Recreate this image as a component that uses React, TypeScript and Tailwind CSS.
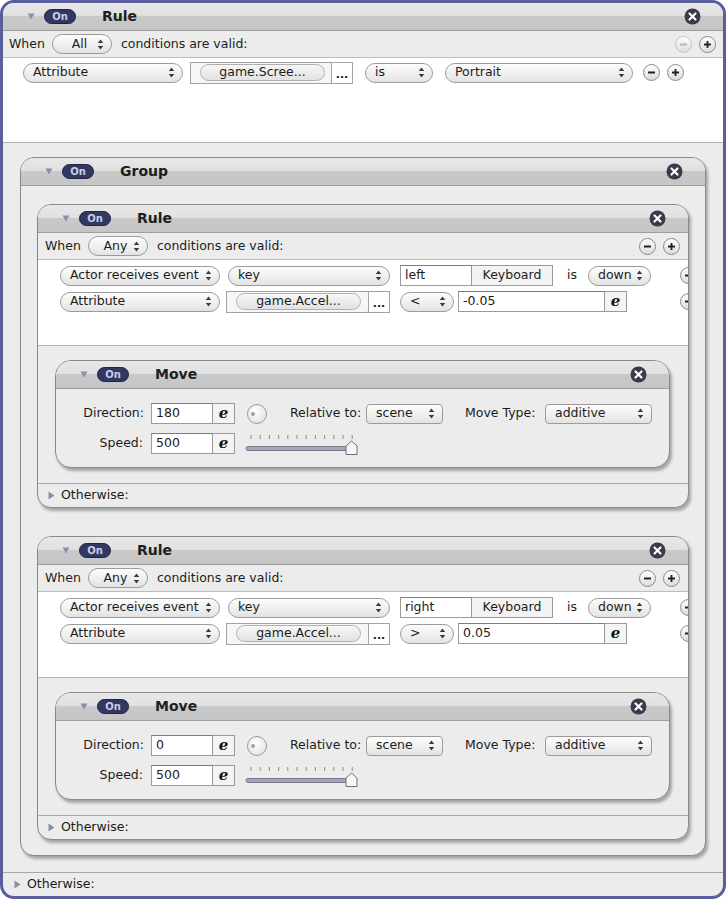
import React from "react";

const Arrows = () => (
  <svg width="7" height="11" viewBox="0 0 7 11" className="shrink-0">
    <path d="M3.5 0.5L6.2 4H0.8Z" fill="#3a3a3a" />
    <path d="M3.5 10.5L6.2 7H0.8Z" fill="#3a3a3a" />
  </svg>
);

const TriDown = () => (
  <svg width="8" height="7" viewBox="0 0 8 7" className="shrink-0">
    <path d="M0.5 0.5H7.5L4 6.5Z" fill="#8a8eac" />
  </svg>
);

const TriRight = () => (
  <svg width="7" height="9" viewBox="0 0 7 9" className="shrink-0">
    <path d="M0.5 0.5V8.5L6.5 4.5Z" fill="#8a8eac" />
  </svg>
);

const OnPill = () => (
  <span className="shrink-0 w-[32px] h-[15px] rounded-full bg-[#323862] border border-[#1e2247] flex items-center justify-center text-[10px] font-bold leading-none text-[#c9cdea]">
    On
  </span>
);

const CloseBtn = () => (
  <svg width="17" height="17" viewBox="0 0 17 17" className="shrink-0">
    <circle cx="8.5" cy="8.5" r="8" fill="#393a4c" />
    <path d="M5.5 5.5l6 6M11.5 5.5l-6 6" stroke="#fff" strokeWidth="2.2" strokeLinecap="round" />
  </svg>
);

function Header({ title }: { title: string }) {
  return (
    <div className="h-[28px] shrink-0 flex items-center pl-[24px] pr-[22px] border-b border-[#9d9d9d] bg-[linear-gradient(to_bottom,#e7e7e7_0%,#e1e1e1_46%,#c9c9c9_50%,#c5c5c5_100%)]">
      <TriDown />
      <span className="ml-[9px]">
        <OnPill />
      </span>
      <span className="ml-[26px] font-bold text-[14px] text-[#1e1e1e]">{title}</span>
      <span className="ml-auto">
        <CloseBtn />
      </span>
    </div>
  );
}

function CircleBtn({ sign, disabled }: { sign: "-" | "+"; disabled?: boolean }) {
  return (
    <span
      className={
        "shrink-0 w-[17px] h-[17px] rounded-full border flex items-center justify-center bg-[linear-gradient(to_bottom,#ffffff,#dcdcdc)] " +
        (disabled ? "border-[#c4c4c4] text-[#b8b8b8]" : "border-[#8a8a8a] text-[#222]")
      }
    >
      <svg width="9" height="9" viewBox="0 0 9 9">
        <path d="M1 4.5H8" stroke="currentColor" strokeWidth="1.8" />
        {sign === "+" && <path d="M4.5 1V8" stroke="currentColor" strokeWidth="1.8" />}
      </svg>
    </span>
  );
}

function Popup({ label, w, center, square }: { label: string; w: number; center?: boolean; square?: boolean }) {
  return (
    <span
      style={{ width: w }}
      className={
        "shrink-0 border border-[#9b9b9b] bg-[linear-gradient(to_bottom,#fdfdfd,#e3e3e3)] flex items-center pl-[9px] pr-[7px] " +
        (square ? "rounded-[4px] h-[20px]" : "rounded-full h-[20px]")
      }
    >
      <span className={"flex-1 whitespace-nowrap leading-none " + (center ? "text-center" : "")}>{label}</span>
      <Arrows />
    </span>
  );
}

function TextField({ value, w }: { value: string; w: number }) {
  return (
    <span
      style={{ width: w }}
      className="shrink-0 h-[21px] border border-[#9a9a9a] border-t-[#7d7d7d] bg-white flex items-center px-[4px] leading-none"
    >
      {value}
    </span>
  );
}

const EBtn = () => (
  <span className="shrink-0 w-[22px] h-[21px] border border-l-0 border-[#9a9a9a] bg-[#f4f4f4] flex items-center justify-center font-['DejaVu_Serif',serif] font-bold italic text-[15px] leading-none text-[#111]">
    e
  </span>
);

function ValueBox({ label, w, pill }: { label: string; w: number; pill: number }) {
  return (
    <span style={{ width: w }} className="shrink-0 h-[22px] border border-[#a3a3a3] bg-[#f6f6f6] flex items-center pl-[9px]">
      <span
        style={{ width: pill }}
        className="h-[17px] rounded-full border border-[#b0b0b0] bg-[linear-gradient(to_bottom,#f7f7f7,#e2e2e2)] flex items-center justify-center leading-none"
      >
        {label}
      </span>
      <span className="ml-auto w-[21px] h-full border-l border-[#a3a3a3] bg-white flex items-end justify-center pb-[3px] leading-none font-bold text-[11px]">
        ...
      </span>
    </span>
  );
}

const Knob = () => (
  <span className="shrink-0 w-[20px] h-[20px] rounded-full border border-[#9a9a9a] bg-[radial-gradient(circle_at_40%_35%,#ffffff,#dcdcdc)] flex items-center pl-[3px]">
    <span className="w-[4px] h-[4px] rounded-full bg-[#a0a0a0]" />
  </span>
);

const Slider = () => (
  <svg width="116" height="24" viewBox="0 0 116 24" className="shrink-0">
    {Array.from({ length: 12 }).map((_, i) => (
      <line key={i} x1={6 + i * 9.2} y1="3" x2={6 + i * 9.2} y2="7" stroke="#8a8a8a" strokeWidth="1" />
    ))}
    <rect x="1" y="14.5" width="108" height="4" rx="2" fill="#a3a5bd" stroke="#7a7a8a" strokeWidth="1" />
    <path d="M101 22.5V14L106.5 9L112 14V22.5Z" fill="#f7f7f7" stroke="#707070" strokeWidth="1" />
  </svg>
);

function WhenRow({ mode, minusDisabled, pl, pr }: { mode: string; minusDisabled?: boolean; pl: string; pr: string }) {
  return (
    <div className={"h-[27px] shrink-0 flex items-center border-b border-[#bdbdbd] bg-[#ececec] " + pl + " " + pr}>
      <span>When</span>
      <span className="ml-[7px]">
        <Popup label={mode} w={60} center />
      </span>
      <span className="ml-[9px]">conditions are valid:</span>
      <span className="ml-auto flex items-center gap-[7px]">
        <CircleBtn sign="-" disabled={minusDisabled} />
        <CircleBtn sign="+" />
      </span>
    </div>
  );
}

function Otherwise({ pl }: { pl: string }) {
  return (
    <div className={"h-[24px] shrink-0 flex items-center border-t border-[#a8a8a8] " + pl}>
      <TriRight />
      <span className="ml-[6px] text-[#1a1a1a]">Otherwise:</span>
    </div>
  );
}

function MoveBox({ direction }: { direction: string }) {
  return (
    <div className="rounded-[16px] border border-[#8a8a8a] bg-[#ececec] overflow-hidden shadow-[2px_3px_3px_rgba(0,0,0,0.3)]">
      <Header title="Move" />
      <div className="pt-[14px] pb-[13px] flex flex-col gap-[9px]">
        <div className="flex items-center h-[21px]">
          <span className="w-[88px] text-right shrink-0">Direction:</span>
          <span className="ml-[7px] flex">
            <TextField value={direction} w={62} />
            <EBtn />
          </span>
          <span className="ml-[12px]">
            <Knob />
          </span>
          <span className="ml-[23px] w-[76px] shrink-0">Relative to:</span>
          <Popup label="scene" w={77} square />
          <span className="ml-[22px] w-[80px] shrink-0">Move Type:</span>
          <Popup label="additive" w={107} square />
        </div>
        <div className="flex items-center h-[21px]">
          <span className="w-[87px] text-right shrink-0">Speed:</span>
          <span className="ml-[8px] flex">
            <TextField value="500" w={62} />
            <EBtn />
          </span>
          <span className="ml-[10px]">
            <Slider />
          </span>
        </div>
      </div>
    </div>
  );
}

function InnerRule({ keyName, op, value, direction }: { keyName: string; op: string; value: string; direction: string }) {
  return (
    <div className="h-[304px] flex flex-col rounded-[14px] border border-[#8a8a8a] bg-[#ececec] overflow-hidden shadow-[2px_3px_3px_rgba(0,0,0,0.3)]">
      <Header title="Rule" />
      <WhenRow mode="Any" pl="pl-[7px]" pr="pr-[8px]" />
      <div className="h-[86px] shrink-0 bg-white border-b border-[#b4b4b4] pt-[5px] pl-[22px] flex flex-col gap-[5px]">
        <div className="flex items-center h-[21px]">
          <Popup label="Actor receives event" w={160} />
          <span className="ml-[8px]">
            <Popup label="key" w={162} />
          </span>
          <span className="ml-[10px] flex">
            <TextField value={keyName} w={72} />
            <span className="shrink-0 w-[81px] h-[21px] border border-l-0 border-[#9a9a9a] bg-[#f3f3f3] flex items-center justify-center leading-none">
              Keyboard
            </span>
          </span>
          <span className="ml-[14px] w-[11px] shrink-0">is</span>
          <span className="ml-[10px]">
            <Popup label="down" w={63} />
          </span>
          <span className="ml-[29px]">
            <CircleBtn sign="-" />
          </span>
        </div>
        <div className="flex items-center h-[21px]">
          <Popup label="Attribute" w={160} />
          <span className="ml-[6px]">
            <ValueBox label="game.Accel..." w={164} pill={125} />
          </span>
          <span className="ml-[10px]">
            <Popup label={op} w={54} />
          </span>
          <span className="ml-[4px] flex">
            <TextField value={value} w={147} />
            <EBtn />
          </span>
          <span className="ml-[53px]">
            <CircleBtn sign="-" />
          </span>
        </div>
      </div>
      <div className="flex-1 pt-[14px] pl-[17px] pr-[18px]">
        <MoveBox direction={direction} />
      </div>
      <Otherwise pl="pl-[10px]" />
    </div>
  );
}

export default function App() {
  return (
    <div className="w-[726px] h-[899px] bg-white font-['DejaVu_Sans',sans-serif] text-[12.5px] text-[#1c1c1c]">
      <div className="h-full flex flex-col border-[3px] border-[#5a5e9e] rounded-[14px] overflow-hidden bg-[#ececec]">
        <Header title="Rule" />
        <WhenRow mode="All" minusDisabled pl="pl-[6px]" pr="pr-[7px]" />
        <div className="h-[85px] shrink-0 bg-white border-b border-[#b4b4b4] pt-[4px] pl-[20px]">
          <div className="flex items-center h-[21px]">
            <Popup label="Attribute" w={160} />
            <span className="ml-[7px]">
              <ValueBox label="game.Scree..." w={163} pill={125} />
            </span>
            <span className="ml-[12px]">
              <Popup label="is" w={68} />
            </span>
            <span className="ml-[12px]">
              <Popup label="Portrait" w={188} />
            </span>
            <span className="ml-[10px] flex items-center gap-[7px]">
              <CircleBtn sign="-" />
              <CircleBtn sign="+" />
            </span>
          </div>
        </div>
        <div className="flex-1 pt-[14px] px-[17px]">
          <div className="h-[699px] flex flex-col rounded-[14px] border border-[#8a8a8a] bg-[#ececec] overflow-hidden shadow-[2px_3px_3px_rgba(0,0,0,0.3)]">
            <Header title="Group" />
            <div className="pt-[18px] px-[16px] flex flex-col gap-[28px]">
              <InnerRule keyName="left" op="<" value="-0.05" direction="180" />
              <InnerRule keyName="right" op=">" value="0.05" direction="0" />
            </div>
          </div>
        </div>
        <Otherwise pl="pl-[11px]" />
      </div>
    </div>
  );
}
